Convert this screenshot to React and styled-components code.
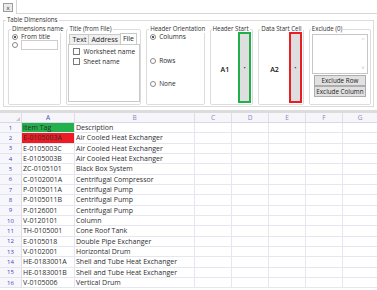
import React from 'react';
import styled, { createGlobalStyle } from 'styled-components';

const GlobalStyle = createGlobalStyle`
  html, body {
    margin: 0;
    padding: 0;
    background: #fff;
  }
  body {
    font-family: "Open Sans", "Noto Sans", sans-serif;
    font-size: 6.5px;
    color: #2b2b2b;
  }
`;

const Screen = styled.div`
  width: 377px;
  height: 290px;
  overflow: hidden;
  background: #fff;
`;

const TabStrip = styled.div`
  display: flex;
  height: 14px;
`;

const CloseTab = styled.div`
  width: 16px;
  border-right: 1px solid #d6d6d6;
  display: flex;
  align-items: center;
  justify-content: center;
`;

const CloseButton = styled.div`
  width: 8px;
  height: 7px;
  border: 1px solid #9c9c9c;
  background: #ececec;
  font: 6px/7px "DejaVu Sans", sans-serif;
  text-align: center;
  color: #444;
`;

const TabFiller = styled.div`
  flex: 1;
  border-bottom: 1px solid #d6d6d6;
`;

const Group = styled.fieldset`
  margin: 0;
  padding: ${p => p.$pad || '0 2px 1px'};
  border: 1px solid #dcdcdc;
  border-radius: 2px;
  min-inline-size: 0;
  width: ${p => (p.$w ? `${p.$w}px` : 'auto')};
  box-sizing: border-box;
  display: flex;
  flex-direction: column;

  legend {
    font-size: 6.2px;
    line-height: 8px;
    padding: 0 1px;
    margin-left: 0;
    color: #333;
    white-space: nowrap;
    letter-spacing: -0.05px;
  }
`;

const OuterGroup = styled(Group)`
  margin: 2px 3px 0 3px;
  padding: 1px 2px 1px 4px;
  border-radius: 0;

  & > legend {
    margin-left: -2px;
  }
`;

const GroupRow = styled.div`
  display: flex;
  height: 80px;
  gap: 5px;
`;

const OptionRow = styled.div`
  display: flex;
  align-items: center;
  height: ${p => p.$h || 8}px;
  margin-top: ${p => p.$mt || 0}px;
  padding-left: 1px;
  gap: 3px;
  white-space: nowrap;
`;

const Radio = styled.span`
  width: 4px;
  height: 4px;
  border-radius: 50%;
  border: 1px solid #8a8a8a;
  background: #fff;
  display: inline-flex;
  align-items: center;
  justify-content: center;
  flex: none;

  &::after {
    content: '';
    width: 2px;
    height: 2px;
    border-radius: 50%;
    background: ${p => (p.$on ? '#1e1e1e' : 'transparent')};
  }
`;

const Check = styled.span`
  width: 5px;
  height: 5px;
  border: 1px solid #7a7a7a;
  background: #fff;
  flex: none;
`;

const TextBox = styled.div`
  width: 40px;
  height: 8px;
  border: 1px solid #cdcdcd;
  background: #fff;
`;

const Tabs = styled.div`
  display: flex;
  align-items: flex-end;
  height: 12px;
`;

const Tab = styled.div`
  height: ${p => (p.$active ? 11 : 9)}px;
  line-height: 9px;
  padding: 0 2px;
  border: 1px solid #c9c9c9;
  border-bottom: ${p => (p.$active ? 'none' : '1px solid #c9c9c9')};
  margin-left: -1px;
  background: ${p => (p.$active ? '#fff' : '#f0f0f0')};
  font-size: 7px;
  color: #222;

  &:first-child {
    margin-left: 1px;
  }
`;

const TabBody = styled.div`
  flex: 1;
  margin-top: -1px;
  border: 1px solid #c9c9c9;
  background: #fff;
  padding: 3px 3px 0;
  display: flex;
  flex-direction: column;
  gap: 4px;
`;

const CellPicker = styled.div`
  flex: 1;
  display: flex;
  align-items: stretch;
`;

const CellRef = styled.div`
  flex: 1;
  display: flex;
  align-items: center;
  justify-content: center;
  font-size: 7px;
  font-weight: 600;
  color: #111;
  padding-top: 2px;
`;

const PickButton = styled.div`
  width: 9px;
  margin: -1px 1px 0 0;
  border: 2px solid ${p => p.$color};
  background: #dedede;
  display: flex;
  align-items: center;
  justify-content: center;
  font-size: 6px;
  color: #333;
`;

const ListBox = styled.div`
  height: 38px;
  margin: 1px 1px 0;
  border: 1px solid #c6c6c6;
  background: #fff;
  display: flex;
  justify-content: flex-end;
`;

const ScrollTrack = styled.div`
  width: 8px;
  display: flex;
  flex-direction: column;
  justify-content: space-between;
  align-items: center;
  padding: 3px 0;
  color: #c4c4c4;
  font: 5px/5px "DejaVu Sans", sans-serif;
`;

const ActionButton = styled.div`
  margin: ${p => (p.$first ? '1px 3px 0' : '0 3px')};
  height: 9px;
  border: 1px solid #adadad;
  background: #e1e1e1;
  text-align: center;
  line-height: 9px;
  font-size: 6.3px;
  color: #222;
  white-space: nowrap;
`;

const Separator = styled.div`
  height: 3px;
  margin-top: 3px;
  background: #dcdcdc;
`;

const Sheet = styled.div`
  display: grid;
  grid-template-columns: 22px 53px 120px 37px 37px 37px 37px 35px;
  grid-template-rows: 10px repeat(16, 10.33px);
`;

const HeadCell = styled.div`
  background: #f5f5fa;
  border-right: 1px solid #dedeea;
  border-bottom: 1px solid #d8d8e6;
  color: ${p => (p.$strong ? '#4a4ab8' : '#8a86c8')};
  font-size: 6.5px;
  display: flex;
  align-items: center;
  justify-content: center;
  position: relative;
`;

const CornerMark = styled.span`
  position: absolute;
  right: 1px;
  bottom: 1px;
  width: 0;
  height: 0;
  border-left: 4px solid transparent;
  border-bottom: 4px solid #c8c8c8;
`;

const RowNum = styled.div`
  background: #f7f7fb;
  border-right: 1px solid #dedeea;
  border-bottom: 1px solid #e4e4ee;
  color: #3d3dc0;
  font-size: 6px;
  display: flex;
  align-items: center;
  justify-content: center;
`;

const Cell = styled.div`
  background: ${p => p.$bg || '#fff'};
  border-right: 1px solid #e6e6f0;
  border-bottom: 1px solid #e6e6f0;
  padding-left: 1px;
  font-size: 7px;
  color: #2e2e2e;
  white-space: nowrap;
  overflow: hidden;
  display: flex;
  align-items: center;
`;

const rows = [
  ['Item Tag', 'Description', '#22b14c'],
  ['E-0105003A', 'Air Cooled Heat Exchanger', '#ed1c24'],
  ['E-0105003C', 'Air Cooled Heat Exchanger'],
  ['E-0105003B', 'Air Cooled Heat Exchanger'],
  ['ZC-0105101', 'Black Box System'],
  ['C-0102001A', 'Centrifugal Compressor'],
  ['P-0105011A', 'Centrifugal Pump'],
  ['P-0105011B', 'Centrifugal Pump'],
  ['P-0126001', 'Centrifugal Pump'],
  ['V-0120101', 'Column'],
  ['TH-0105001', 'Cone Roof Tank'],
  ['E-0105018', 'Double Pipe Exchanger'],
  ['V-0102001', 'Horizontal Drum'],
  ['HE-0183001A', 'Shell and Tube Heat Exchanger'],
  ['HE-0183001B', 'Shell and Tube Heat Exchanger'],
  ['V-0105006', 'Vertical Drum'],
];

const letters = ['A', 'B', 'C', 'D', 'E', 'F', 'G'];

const App = () => {
  return (
    <Screen>
      <GlobalStyle />
      <TabStrip>
        <CloseTab>
          <CloseButton>x</CloseButton>
        </CloseTab>
        <TabFiller />
      </TabStrip>

      <OuterGroup>
        <legend>Table Dimensions</legend>
        <GroupRow>
          <Group $w={55}>
            <legend>Dimensions name</legend>
            <OptionRow $h={7}>
              <Radio $on />
              From title
            </OptionRow>
            <OptionRow $h={9}>
              <Radio />
              <TextBox />
            </OptionRow>
          </Group>

          <Group $w={77} $pad="0 0 2px 1px">
            <legend>Title (from File)</legend>
            <Tabs>
              <Tab>Text</Tab>
              <Tab>Address</Tab>
              <Tab $active>File</Tab>
            </Tabs>
            <TabBody>
              <OptionRow $h={6}>
                <Check />
                Worksheet name
              </OptionRow>
              <OptionRow $h={6}>
                <Check />
                Sheet name
              </OptionRow>
            </TabBody>
          </Group>

          <Group $w={60}>
            <legend>Header Orientation</legend>
            <OptionRow $h={7}>
              <Radio $on />
              Columns
            </OptionRow>
            <OptionRow $h={7} $mt={17}>
              <Radio />
              Rows
            </OptionRow>
            <OptionRow $h={7} $mt={16}>
              <Radio />
              None
            </OptionRow>
          </Group>

          <Group $w={45} $pad="0 0 1px 1px">
            <legend>Header Start</legend>
            <CellPicker>
              <CellRef>A1</CellRef>
              <PickButton $color="#1fb04a">•</PickButton>
            </CellPicker>
          </Group>

          <Group $w={47} $pad="0 0 1px 1px">
            <legend>Data Start Cell</legend>
            <CellPicker>
              <CellRef>A2</CellRef>
              <PickButton $color="#ec1c24">•</PickButton>
            </CellPicker>
          </Group>

          <Group $w={64} $pad="0 1px 1px">
            <legend>Exclude (0)</legend>
            <ListBox>
              <ScrollTrack>
                <span>^</span>
                <span>v</span>
              </ScrollTrack>
            </ListBox>
            <ActionButton $first>Exclude Row</ActionButton>
            <ActionButton>Exclude Column</ActionButton>
          </Group>
        </GroupRow>
      </OuterGroup>

      <Separator />

      <Sheet>
        <HeadCell>
          <CornerMark />
        </HeadCell>
        {letters.map((l, i) => (
          <HeadCell key={l} $strong={i === 0}>
            {l}
          </HeadCell>
        ))}
        {rows.map(([tag, desc, bg], i) => (
          <React.Fragment key={i}>
            <RowNum>{i + 1}</RowNum>
            <Cell $bg={bg}>{tag}</Cell>
            <Cell>{desc}</Cell>
            {letters.slice(2).map(l => (
              <Cell key={l} />
            ))}
          </React.Fragment>
        ))}
      </Sheet>
    </Screen>
  );
};

export default App;
